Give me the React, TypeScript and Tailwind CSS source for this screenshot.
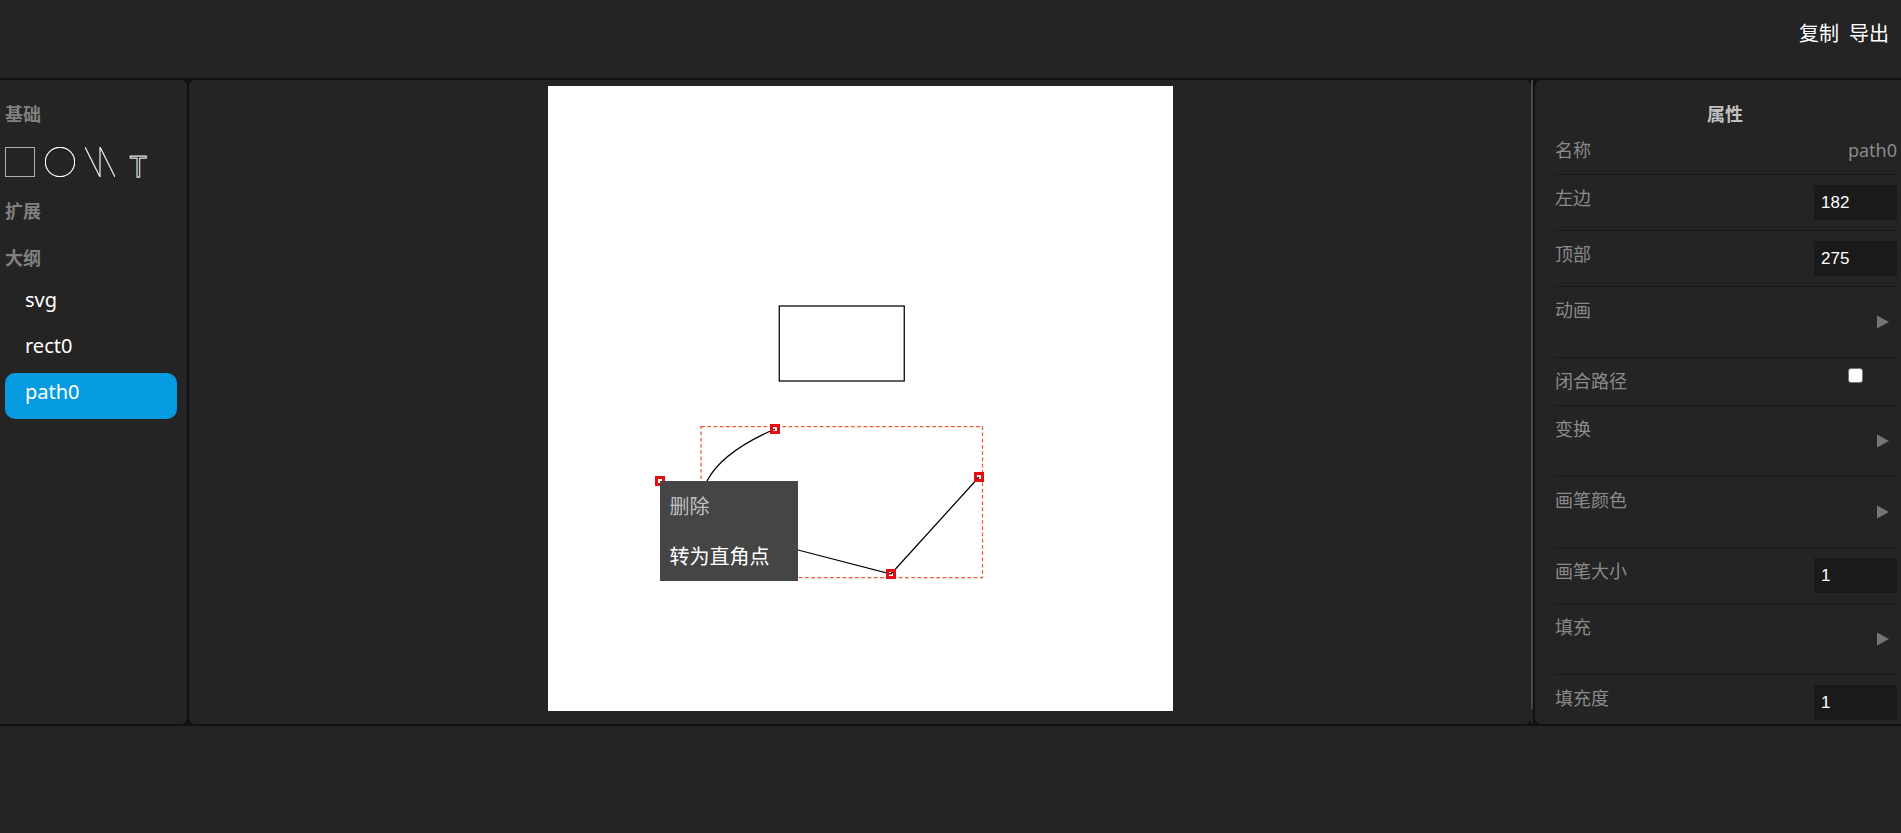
import React, { useState } from "react";

type Row =
  | { kind: "text"; label: string; value: string }
  | { kind: "input"; label: string; value: string }
  | { kind: "group"; label: string }
  | { kind: "check"; label: string };

const rows: Row[] = [
  { kind: "text", label: "名称", value: "path0" },
  { kind: "input", label: "左边", value: "182" },
  { kind: "input", label: "顶部", value: "275" },
  { kind: "group", label: "动画" },
  { kind: "check", label: "闭合路径" },
  { kind: "group", label: "变换" },
  { kind: "group", label: "画笔颜色" },
  { kind: "input", label: "画笔大小", value: "1" },
  { kind: "group", label: "填充" },
  { kind: "input", label: "填充度", value: "1" },
];

const handles = [
  [227, 343],
  [112, 395],
  [343, 488],
  [431, 391],
];

function PropertyRow({ row, id }: { row: Row; id: string }) {
  return (
    <div className="flex shrink-0 items-start justify-between border-b border-[#1a1a1a] py-2.5 pl-0.5">
      {row.kind === "input" || row.kind === "check" ? (
        <label htmlFor={id}>{row.label}</label>
      ) : (
        <span>{row.label}</span>
      )}
      {row.kind === "text" && <span>{row.value}</span>}
      {row.kind === "input" && (
        <input
          id={id}
          type="text"
          defaultValue={row.value}
          className="h-[35px] w-[83px] bg-[#1a1a1a] px-[7px] font-['Liberation_Sans',sans-serif] text-[17px] text-white outline-none"
        />
      )}
      {row.kind === "check" && (
        <input
          id={id}
          type="checkbox"
          className="mr-[34px] size-[15px] appearance-none rounded-[3px] border border-[#767676] bg-white checked:bg-[#069be0]"
        />
      )}
      {row.kind === "group" && (
        <button type="button" aria-label={"展开" + row.label} className="flex h-[50px] items-center pr-2">
          <svg width="12" height="14" viewBox="0 0 12 14" fill="#757575">
            <path d="M0 0.5L12 7L0 13.5Z" />
          </svg>
        </button>
      )}
    </div>
  );
}

function Drawing() {
  return (
    <svg width="625" height="625" viewBox="0 0 625 625" fill="none" className="block bg-white">
      <rect x="231.25" y="220" width="125" height="75" stroke="#000" strokeWidth="1.25" />
      <rect x="153" y="340.5" width="281.5" height="151" stroke="#ec5a36" strokeWidth="1.25" strokeDasharray="3.75 2.5" />
      {handles.map(([x, y]) => (
        <path key={x} d={`M${x - 5} ${y - 5}h10v10h-10zM${x - 2} ${y - 2}v4h4v-4z`} fill="#e60c10" />
      ))}
      <path
        d="M227 343Q174 366 159 395C147 419 153 439 250 464L343 488L431 391"
        stroke="#000"
        strokeWidth="1.25"
      />
      {handles.map(([x, y]) => (
        <path key={x} d={`M${x - 5} ${y - 5}h10v10h-10zM${x - 2} ${y - 2}v4h4v-4z`} fill="#e60c10" />
      ))}
    </svg>
  );
}

export default function App() {
  const [selected, setSelected] = useState("path0");
  return (
    <div className="flex h-screen flex-col gap-0.5 bg-[#111] font-['Noto_Sans','Noto_Sans_CJK_SC',sans-serif] text-lg/[27px] text-[#808080]">
      <header className="flex h-[78px] shrink-0 items-start justify-end gap-2.5 bg-[#242424] px-3 py-[19px] text-xl/[30px] text-white">
        <button type="button">复制</button>
        <button type="button">导出</button>
      </header>

      <main className="flex min-h-0 flex-1 gap-0.5">
        <aside className="w-[187px] shrink-0 rounded-r-md bg-[#242424] pt-[21px] pl-[5px]">
          <h2 className="font-bold">基础</h2>
          <div className="mt-[19px] flex gap-2.5">
            <button type="button" aria-label="矩形">
              <svg width="30" height="30" fill="none" stroke="#b0b0b0">
                <rect x="0.5" y="0.5" width="29" height="29" />
              </svg>
            </button>
            <button type="button" aria-label="圆形">
              <svg width="30" height="30" fill="none" stroke="#fff" strokeWidth="1.25">
                <circle cx="15" cy="15" r="14.7" />
              </svg>
            </button>
            <button type="button" aria-label="路径">
              <svg width="30" height="30" fill="none" stroke="#e8e8e8" strokeWidth="1.25">
                <path d="M0 0L15 30L15 0L30 30" />
              </svg>
            </button>
            <button type="button" aria-label="文本">
              <svg width="30" height="30" className="overflow-visible font-['Open_Sans',sans-serif]">
                <text x="5" y="30" fontSize="30" fill="#000" stroke="#d8d8d8" strokeWidth="1.25">
                  T
                </text>
              </svg>
            </button>
          </div>
          <h2 className="mt-[21px] font-bold">扩展</h2>
          <h2 className="mt-5 font-bold">大纲</h2>
          <ul className="mt-[9px] mr-2.5">
            {["svg", "rect0", "path0"].map((name) => (
              <li key={name}>
                <button
                  type="button"
                  onClick={() => setSelected(name)}
                  className={
                    selected === name
                      ? "block h-[46px] w-full rounded-[10px] bg-[#069be0] px-5 pt-1 pb-3 text-left text-xl/[30px] text-white"
                      : "block h-[46px] w-full rounded-[10px] px-5 pt-1 pb-3 text-left text-xl/[30px] text-white"
                  }
                >
                  {name}
                </button>
              </li>
            ))}
          </ul>
        </aside>

        <section className="flex min-w-0 flex-1">
          <div className="flex flex-1 items-start justify-center rounded-md bg-[#242424] pt-1.5">
            <div className="relative">
              <Drawing />
              <menu className="absolute top-[395px] left-28 w-[138px] bg-[#454545] text-xl text-white">
                <li>
                  <button type="button" className="block h-[50px] w-full px-2.5 pt-0.5 text-left text-[#c0c0c0]">
                    删除
                  </button>
                </li>
                <li>
                  <button type="button" className="block h-[50px] w-full px-2.5 pt-0.5 text-left">
                    转为直角点
                  </button>
                </li>
              </menu>
            </div>
          </div>
          <div className="w-0.5 bg-[#242424] pb-[15px]">
            <div className="h-full bg-[#484848]" />
          </div>
        </section>

        <aside className="flex w-[366px] shrink-0 flex-col overflow-hidden rounded-l-md bg-[#242424] pt-[21px] pr-1 pl-[18px] text-[#8a8a8a]">
          <h2 className="text-center leading-[26px] font-bold text-[#c0c0c0]">属性</h2>
          {rows.map((row, i) => (
            <PropertyRow key={row.label} row={row} id={"prop-" + i} />
          ))}
        </aside>
      </main>

      <footer className="h-[107px] shrink-0 bg-[#242424]" />
    </div>
  );
}
